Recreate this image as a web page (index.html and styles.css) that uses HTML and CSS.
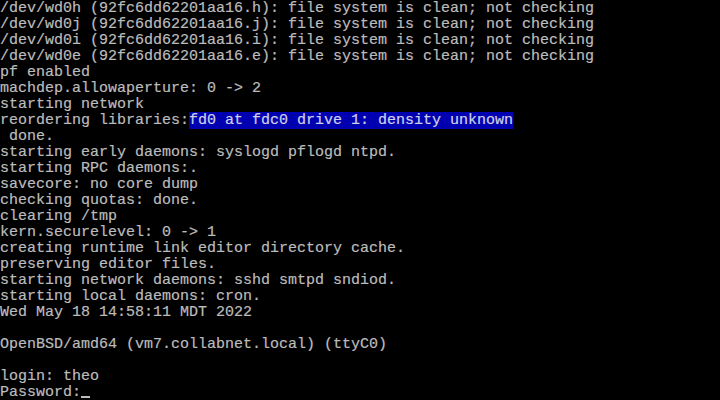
FILE: index.html
```html
<!DOCTYPE html>
<html>
<head>
<meta charset="utf-8">
<link rel="stylesheet" href="styles.css">
</head>
<body>
<pre class="console">/dev/wd0h (92fc6dd62201aa16.h): file system is clean; not checking
/dev/wd0j (92fc6dd62201aa16.j): file system is clean; not checking
/dev/wd0i (92fc6dd62201aa16.i): file system is clean; not checking
/dev/wd0e (92fc6dd62201aa16.e): file system is clean; not checking
pf enabled
machdep.allowaperture: 0 -> 2
starting network
reordering libraries:<span class="hl">fd0 at fdc0 drive 1: density unknown</span>
 done.
starting early daemons: syslogd pflogd ntpd.
starting RPC daemons:.
savecore: no core dump
checking quotas: done.
clearing /tmp
kern.securelevel: 0 -> 1
creating runtime link editor directory cache.
preserving editor files.
starting network daemons: sshd smtpd sndiod.
starting local daemons: cron.
Wed May 18 14:58:11 MDT 2022

OpenBSD/amd64 (vm7.collabnet.local) (ttyC0)

login: theo
Password:<span class="cursor"></span></pre>
</body>
</html>
```
FILE: styles.css
```css
html, body {
  margin: 0;
  padding: 0;
  background: #000;
  width: 720px;
  height: 400px;
  overflow: hidden;
}
.console {
  margin: 0;
  padding-top: 1px;
  font-family: "Liberation Mono", monospace;
  font-size: 15px;
  line-height: 16px;
  color: #bcbcbc;
  white-space: pre;
  -webkit-text-stroke: 0.2px #bcbcbc;
}
.hl {
  background: #0000b0;
  color: #d0d0e8;
  -webkit-text-stroke: 0.2px #d0d0e8;
  display: inline-block;
  height: 16px;
  margin-top: -1px;
  padding-top: 1px;
  vertical-align: top;
}
.cursor {
  display: inline-block;
  width: 9px;
  height: 2px;
  background: #bcbcbc;
  vertical-align: -2px;
}
```
